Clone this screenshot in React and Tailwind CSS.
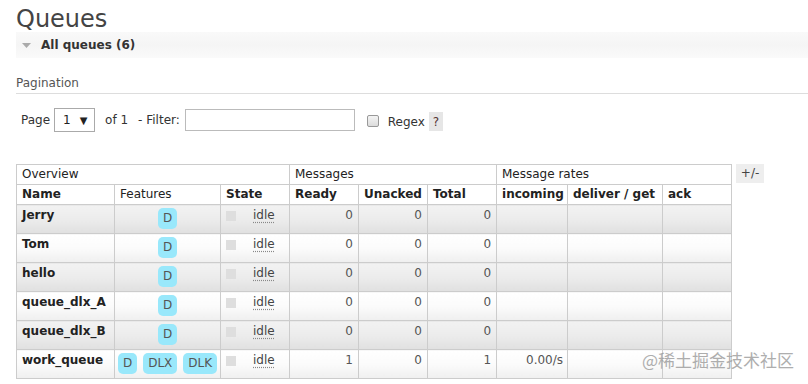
import React from 'react';

const queues = [
  { name: 'Jerry', features: ['D'], ready: 0, unacked: 0, total: 0, incoming: '' },
  { name: 'Tom', features: ['D'], ready: 0, unacked: 0, total: 0, incoming: '' },
  { name: 'hello', features: ['D'], ready: 0, unacked: 0, total: 0, incoming: '' },
  { name: 'queue_dlx_A', features: ['D'], ready: 0, unacked: 0, total: 0, incoming: '' },
  { name: 'queue_dlx_B', features: ['D'], ready: 0, unacked: 0, total: 0, incoming: '' },
  { name: 'work_queue', features: ['D', 'DLX', 'DLK'], ready: 1, unacked: 0, total: 1, incoming: '0.00/s' },
];

const Badge = ({ label }) => (
  <span className="inline-block px-[5px] py-[3px] leading-[15px] rounded-[5px] bg-[#99e8fb] text-[#555]">
    {label}
  </span>
);

const App = () => {
  const th = 'border border-[#ccc] px-[5px] pt-[2px] pb-[2px] leading-[15px] text-left align-top';
  return (
    <div className="relative min-h-screen bg-white text-[12px] text-[#333] pt-[7px]" style={{ fontFamily: '"DejaVu Sans", Verdana, sans-serif' }}>
      {/* Title */}
      <h1 className="pl-[16px] text-[24px] leading-[25px] text-[#444]">Queues</h1>

      {/* Section bar */}
      <div className="ml-[16px] h-[26px] flex items-center bg-gradient-to-b from-[#f9f9f9] via-[#f5f5f5] to-[#fafafa]">
        <svg width="9" height="5" viewBox="0 0 9 5" className="ml-[6px] mr-[10px]">
          <polygon points="0,0 9,0 4.5,5" fill="#aaa" />
        </svg>
        <span className="font-bold text-[#333]">All queues (6)</span>
      </div>

      {/* Pagination */}
      <div className="ml-[16px] mt-[18px] pb-[2px] border-b border-[#ddd] leading-[15px] text-[#555]">Pagination</div>

      <div className="mt-[14px] ml-[21px] h-[24px] flex items-center text-[#333]">
        <span>Page</span>
        <div className="ml-[4px] w-[41px] h-[24px] border border-[#aaa] flex items-center pl-[8px] gap-[9px] text-[#222]">
          <span>1</span>
          <span className="text-[10px]">▼</span>
        </div>
        <span className="ml-[10px]">of 1</span>
        <span className="ml-[10px]">- Filter:</span>
        <div className="ml-[5px] w-[170px] h-[22px] border border-[#bbb]" />
        <span className="ml-[12px] w-[12px] h-[12px] mt-[1px] rounded-[2px] border border-[#999] bg-gradient-to-b from-[#f4f4f4] to-[#dcdcdc]" />
        <span className="ml-[9px] mt-[3px]">Regex</span>
        <span className="ml-[4px] mt-[3px] h-[19px] px-[4px] flex items-center bg-[#e6e6e6] text-[#533]">?</span>
      </div>

      {/* Table */}
      <div className="mt-[32px] ml-[16px] flex items-start gap-[4px]">
        <table className="table-fixed border-collapse w-[715px] text-[#222]">
          <colgroup>
            <col className="w-[98px]" />
            <col className="w-[106px]" />
            <col className="w-[69px]" />
            <col className="w-[69px]" />
            <col className="w-[69px]" />
            <col className="w-[69px]" />
            <col className="w-[71px]" />
            <col className="w-[95px]" />
            <col className="w-[69px]" />
          </colgroup>
          <thead>
            <tr>
              <th colSpan={3} className={`${th} font-normal`}>Overview</th>
              <th colSpan={3} className={`${th} font-normal`}>Messages</th>
              <th colSpan={3} className={`${th} font-normal`}>Message rates</th>
            </tr>
            <tr>
              <th className={`${th} font-bold`}>Name</th>
              <th className={`${th} font-normal`}>Features</th>
              <th className={`${th} font-bold`}>State</th>
              <th className={`${th} font-bold`}>Ready</th>
              <th className={`${th} font-bold`}>Unacked</th>
              <th className={`${th} font-bold`}>Total</th>
              <th className={`${th} font-bold`}>incoming</th>
              <th className={`${th} font-bold whitespace-nowrap`}>deliver / get</th>
              <th className={`${th} font-bold`}>ack</th>
            </tr>
          </thead>
          <tbody>
            {queues.map((q, i) => {
              const bg = i % 2 === 0
                ? 'bg-gradient-to-b from-[#f2f2f2] via-[#ececec] to-[#e0e0e0]'
                : 'bg-gradient-to-b from-[#ffffff] via-[#fbfbfb] to-[#efefef]';
              const td = `border border-[#ccc] px-[5px] pt-[3px] pb-[4px] leading-[15px] align-top ${bg}`;
              return (
                <tr key={q.name}>
                  <td className={`${td} font-bold text-[#222] whitespace-nowrap`}>{q.name}</td>
                  <td className={td}>
                    <div className="flex justify-center gap-[6px]">
                      {q.features.map((f) => <Badge key={f} label={f} />)}
                    </div>
                  </td>
                  <td className={td}>
                    <div className="flex items-start">
                      <span className="mt-[3px] w-[10px] h-[10px] bg-[#dedede]" />
                      <span className="ml-[17px] text-[#444] underline decoration-dotted decoration-[#888] underline-offset-[3px]">idle</span>
                    </div>
                  </td>
                  <td className={`${td} text-right text-[#555]`}>{q.ready}</td>
                  <td className={`${td} text-right text-[#555]`}>{q.unacked}</td>
                  <td className={`${td} text-right text-[#555]`}>{q.total}</td>
                  <td className={`${td} text-right text-[#555] pr-[4px]`}>{q.incoming}</td>
                  <td className={td}></td>
                  <td className={td}></td>
                </tr>
              );
            })}
          </tbody>
        </table>
        <button className="w-[28px] h-[19px] bg-[#eee] text-[#444] text-[12px] leading-[19px] text-center">+/-</button>
      </div>

      {/* Watermark */}
      <div
        className="absolute left-[642px] top-[349px] text-[17px] leading-[22px] text-[#9a9a9a] opacity-80 whitespace-nowrap"
        style={{ fontFamily: '"Noto Sans CJK SC", "Noto Sans", sans-serif' }}
      >
        @稀土掘金技术社区
      </div>
    </div>
  );
};

export default App;
